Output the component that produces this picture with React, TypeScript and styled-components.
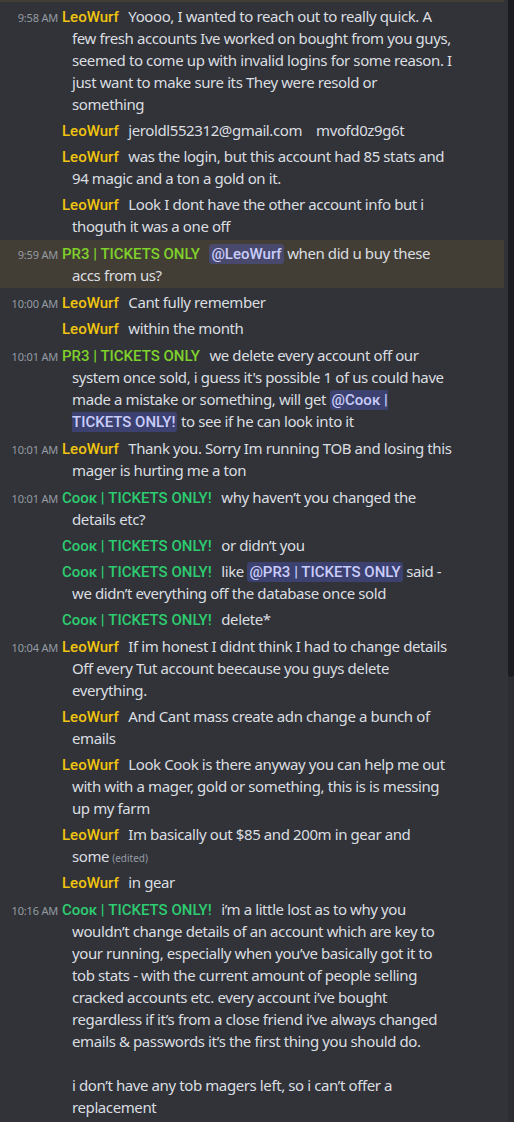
import React from "react";
import styled, { createGlobalStyle } from "styled-components";

const GlobalStyle = createGlobalStyle`
  html, body { margin: 0; padding: 0; background: #313338; }
  body { overflow: hidden; }
`;

const Screen = styled.div`
  display: grid;
  grid-template-columns: 1fr 6px;
  column-gap: 4px;
  height: 1122px;
  overflow: hidden;
  background: #313338;
  font-family: "Noto Sans", "Open Sans", sans-serif;
`;

const MessageList = styled.div`
  display: flex;
  flex-direction: column;
  min-width: 0;
`;

const PrevTail = styled.div`
  height: 2px;
  background: #433e35;
`;

const Row = styled.div<{ $mentioned?: boolean; $groupStart?: boolean }>`
  margin-top: ${(p) => (p.$groupStart ? "1px" : "0")};
  padding: 2px 20px 2px 72px;
  background: ${(p) => (p.$mentioned ? "#433e35" : "transparent")};
  color: #dbdee1;
  font-size: 15px;
  line-height: 22px;
  letter-spacing: -0.4px;
  text-indent: -72px;
  white-space: pre-wrap;
`;

const Stamp = styled.span`
  display: inline-block;
  width: 58px;
  text-indent: 0;
  text-align: right;
  font-size: 11px;
  line-height: 12px;
  letter-spacing: -0.2px;
  color: #949ba4;
  vertical-align: baseline;
`;

const Author = styled.span<{ $color: string }>`
  margin-left: 4px;
  margin-right: 6px;
  color: ${(p) => p.$color};
  font-family: Roboto, "Noto Sans", sans-serif;
  font-weight: 500;
  line-height: 16px;
  letter-spacing: 0;
`;

const Mention = styled.span`
  padding: 1px 2px;
  border-radius: 3px;
  background: rgba(88, 101, 242, 0.3);
  color: #c9cdfb;
  font-family: Roboto, "Noto Sans", sans-serif;
  font-weight: 500;
  line-height: 16px;
  letter-spacing: 0;
`;

const Edited = styled.span`
  margin-left: 3px;
  font-size: 10px;
  line-height: 12px;
  letter-spacing: 0;
  color: #949ba4;
`;

const ScrollTrack = styled.div`
  background: #2b2d31;
  display: flex;
  flex-direction: column;
`;

const ScrollThumb = styled.div`
  height: 677px;
  background: #1a1b1e;
  border-radius: 0 0 3px 3px;
`;

type Part = string | { mention: string } | { edited: true };

type Msg = {
  time?: string;
  user: "leo" | "pr3" | "cook";
  mentioned?: boolean;
  parts: Part[];
};

const users = {
  leo: { name: "LeoWurf", color: "#f1c40f" },
  pr3: { name: "PR3 | TICKETS ONLY", color: "#7fd12b" },
  cook: { name: "Cooк | TICKETS ONLY!", color: "#2ecc71" },
};

const messages: Msg[] = [
  {
    time: "9:58 AM",
    user: "leo",
    parts: [
      "Yoooo, I wanted to reach out to really quick. A\nfew fresh accounts Ive worked on bought from you guys,\nseemed to come up with invalid logins for some reason. I\njust want to make sure its They were resold or\nsomething",
    ],
  },
  { user: "leo", parts: ["jeroldl552312@gmail.com    mvofd0z9g6t"] },
  {
    user: "leo",
    parts: ["was the login, but this account had 85 stats and\n94 magic and a ton a gold on it."],
  },
  {
    user: "leo",
    parts: ["Look I dont have the other account info but i\nthoguth it was a one off"],
  },
  {
    time: "9:59 AM",
    user: "pr3",
    mentioned: true,
    parts: [{ mention: "@LeoWurf" }, " when did u buy these\naccs from us?"],
  },
  { time: "10:00 AM", user: "leo", parts: ["Cant fully remember"] },
  { user: "leo", parts: ["within the month"] },
  {
    time: "10:01 AM",
    user: "pr3",
    parts: [
      "we delete every account off our\nsystem once sold, i guess it's possible 1 of us could have\nmade a mistake or something, will get ",
      { mention: "@Cooк |\nTICKETS ONLY!" },
      " to see if he can look into it",
    ],
  },
  {
    time: "10:01 AM",
    user: "leo",
    parts: ["Thank you. Sorry Im running TOB and losing this\nmager is hurting me a ton"],
  },
  {
    time: "10:01 AM",
    user: "cook",
    parts: ["why haven’t you changed the\ndetails etc?"],
  },
  { user: "cook", parts: ["or didn’t you"] },
  {
    user: "cook",
    parts: [
      "like ",
      { mention: "@PR3 | TICKETS ONLY" },
      " said -\nwe didn’t everything off the database once sold",
    ],
  },
  { user: "cook", parts: ["delete*"] },
  {
    time: "10:04 AM",
    user: "leo",
    parts: [
      "If im honest I didnt think I had to change details\nOff every Tut account beecause you guys delete\neverything.",
    ],
  },
  {
    user: "leo",
    parts: ["And Cant mass create adn change a bunch of\nemails"],
  },
  {
    user: "leo",
    parts: [
      "Look Cook is there anyway you can help me out\nwith with a mager, gold or something, this is is messing\nup my farm",
    ],
  },
  {
    user: "leo",
    parts: ["Im basically out $85 and 200m in gear and\nsome", { edited: true }],
  },
  { user: "leo", parts: ["in gear"] },
  {
    time: "10:16 AM",
    user: "cook",
    parts: [
      "i’m a little lost as to why you\nwouldn’t change details of an account which are key to\nyour running, especially when you’ve basically got it to\ntob stats - with the current amount of people selling\ncracked accounts etc. every account i’ve bought\nregardless if it’s from a close friend i’ve always changed\nemails & passwords it’s the first thing you should do.\n\ni don’t have any tob magers left, so i can’t offer a\nreplacement",
    ],
  },
];

function renderPart(part: Part, i: number) {
  if (typeof part === "string") return <React.Fragment key={i}>{part}</React.Fragment>;
  if ("mention" in part) return <Mention key={i}>{part.mention}</Mention>;
  return <Edited key={i}>(edited)</Edited>;
}

export default function App() {
  return (
    <>
      <GlobalStyle />
      <Screen>
        <MessageList>
          <PrevTail />
          {messages.map((m, idx) => {
            const u = users[m.user];
            return (
              <Row key={idx} $mentioned={m.mentioned} $groupStart={!!m.time}>
                <Stamp>{m.time ?? ""}</Stamp>
                <Author $color={u.color}>{u.name}</Author>
                {" "}
                {m.parts.map(renderPart)}
              </Row>
            );
          })}
        </MessageList>
        <ScrollTrack>
          <ScrollThumb />
        </ScrollTrack>
      </Screen>
    </>
  );
}
